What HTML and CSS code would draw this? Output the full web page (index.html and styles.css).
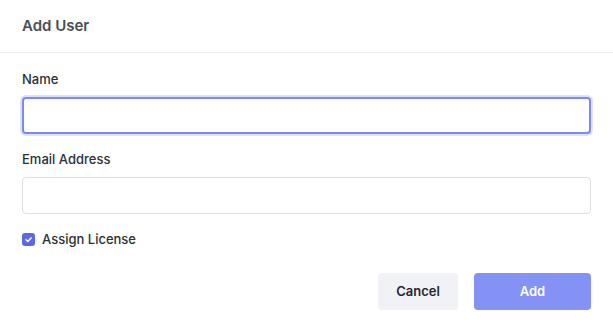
FILE: index.html
```html
<html>
<head>
<link rel="stylesheet" href="styles.css">
</head>
<body>
<div class="dialog">
    <!-- Header -->
    <div class="head">Add User</div>

    <div class="body">
        <label class="label" for="name">Name</label>
        <input class="field focus" id="name" type="text">

        <label class="label" for="email">Email Address</label>
        <input class="field" id="email" type="text">

        <label class="check">
            <span class="box">
                <svg width="9" height="9" viewBox="0 0 10 10"><path d="M2.2 5.2 L4.2 7.1 L7.9 3.2" fill="none" stroke="#fff" stroke-width="1.6" stroke-linecap="round" stroke-linejoin="round"/></svg>
            </span>
            Assign License
        </label>

        <div class="actions">
            <span class="btn cancel">Cancel</span>
            <span class="btn add">Add</span>
        </div>
    </div>
</div>
</body>
</html>
```

FILE: styles.css
```css
* {
    margin: 0;
    padding: 0;
    box-sizing: border-box;
}

body {
    background: #fff;
    font-family: Inter, "Noto Sans", sans-serif;
    color: #2b2f36;
}

.dialog {
    width: 613px;
    height: 335px;
}

.head {
    height: 53px;
    padding: 0 22px;
    border-bottom: 1px solid #eceef1;
    font-size: 15px;
    font-weight: 600;
    line-height: 52px;
    color: #474c55;
}

.body {
    padding: 17px 22px 0;
    display: flex;
    flex-direction: column;
}

.label {
    font-size: 13px;
    font-weight: 500;
    line-height: 18px;
    color: #2b2f36;
    margin-bottom: 9px;
}

.field {
    height: 37px;
    width: 569px;
    border: 1px solid #dcdfe4;
    border-radius: 4px;
    margin-bottom: 16px;
    outline: none;
    font: 13px Inter, sans-serif;
    padding: 0 10px;
}

.field.focus {
    border: 2px solid #7e89ef;
    box-shadow: 0 0 0 2px rgba(126, 137, 239, 0.25);
}

.check {
    display: flex;
    align-items: center;
    gap: 7px;
    height: 18px;
    font-size: 13px;
    font-weight: 500;
    color: #2b2f36;
}

.box {
    width: 13px;
    height: 13px;
    border-radius: 3px;
    background: #5c67e0;
    display: flex;
    align-items: center;
    justify-content: center;
}

.actions {
    display: flex;
    justify-content: flex-end;
    gap: 16px;
    margin-top: 25px;
}

.btn {
    height: 37px;
    border-radius: 4px;
    font-size: 13px;
    font-weight: 600;
    line-height: 37px;
    text-align: center;
}

.btn.cancel {
    width: 80px;
    background: #f1f2f6;
    color: #24272d;
}

.btn.add {
    width: 117px;
    background: #8592f5;
    color: #fff;
}
```
